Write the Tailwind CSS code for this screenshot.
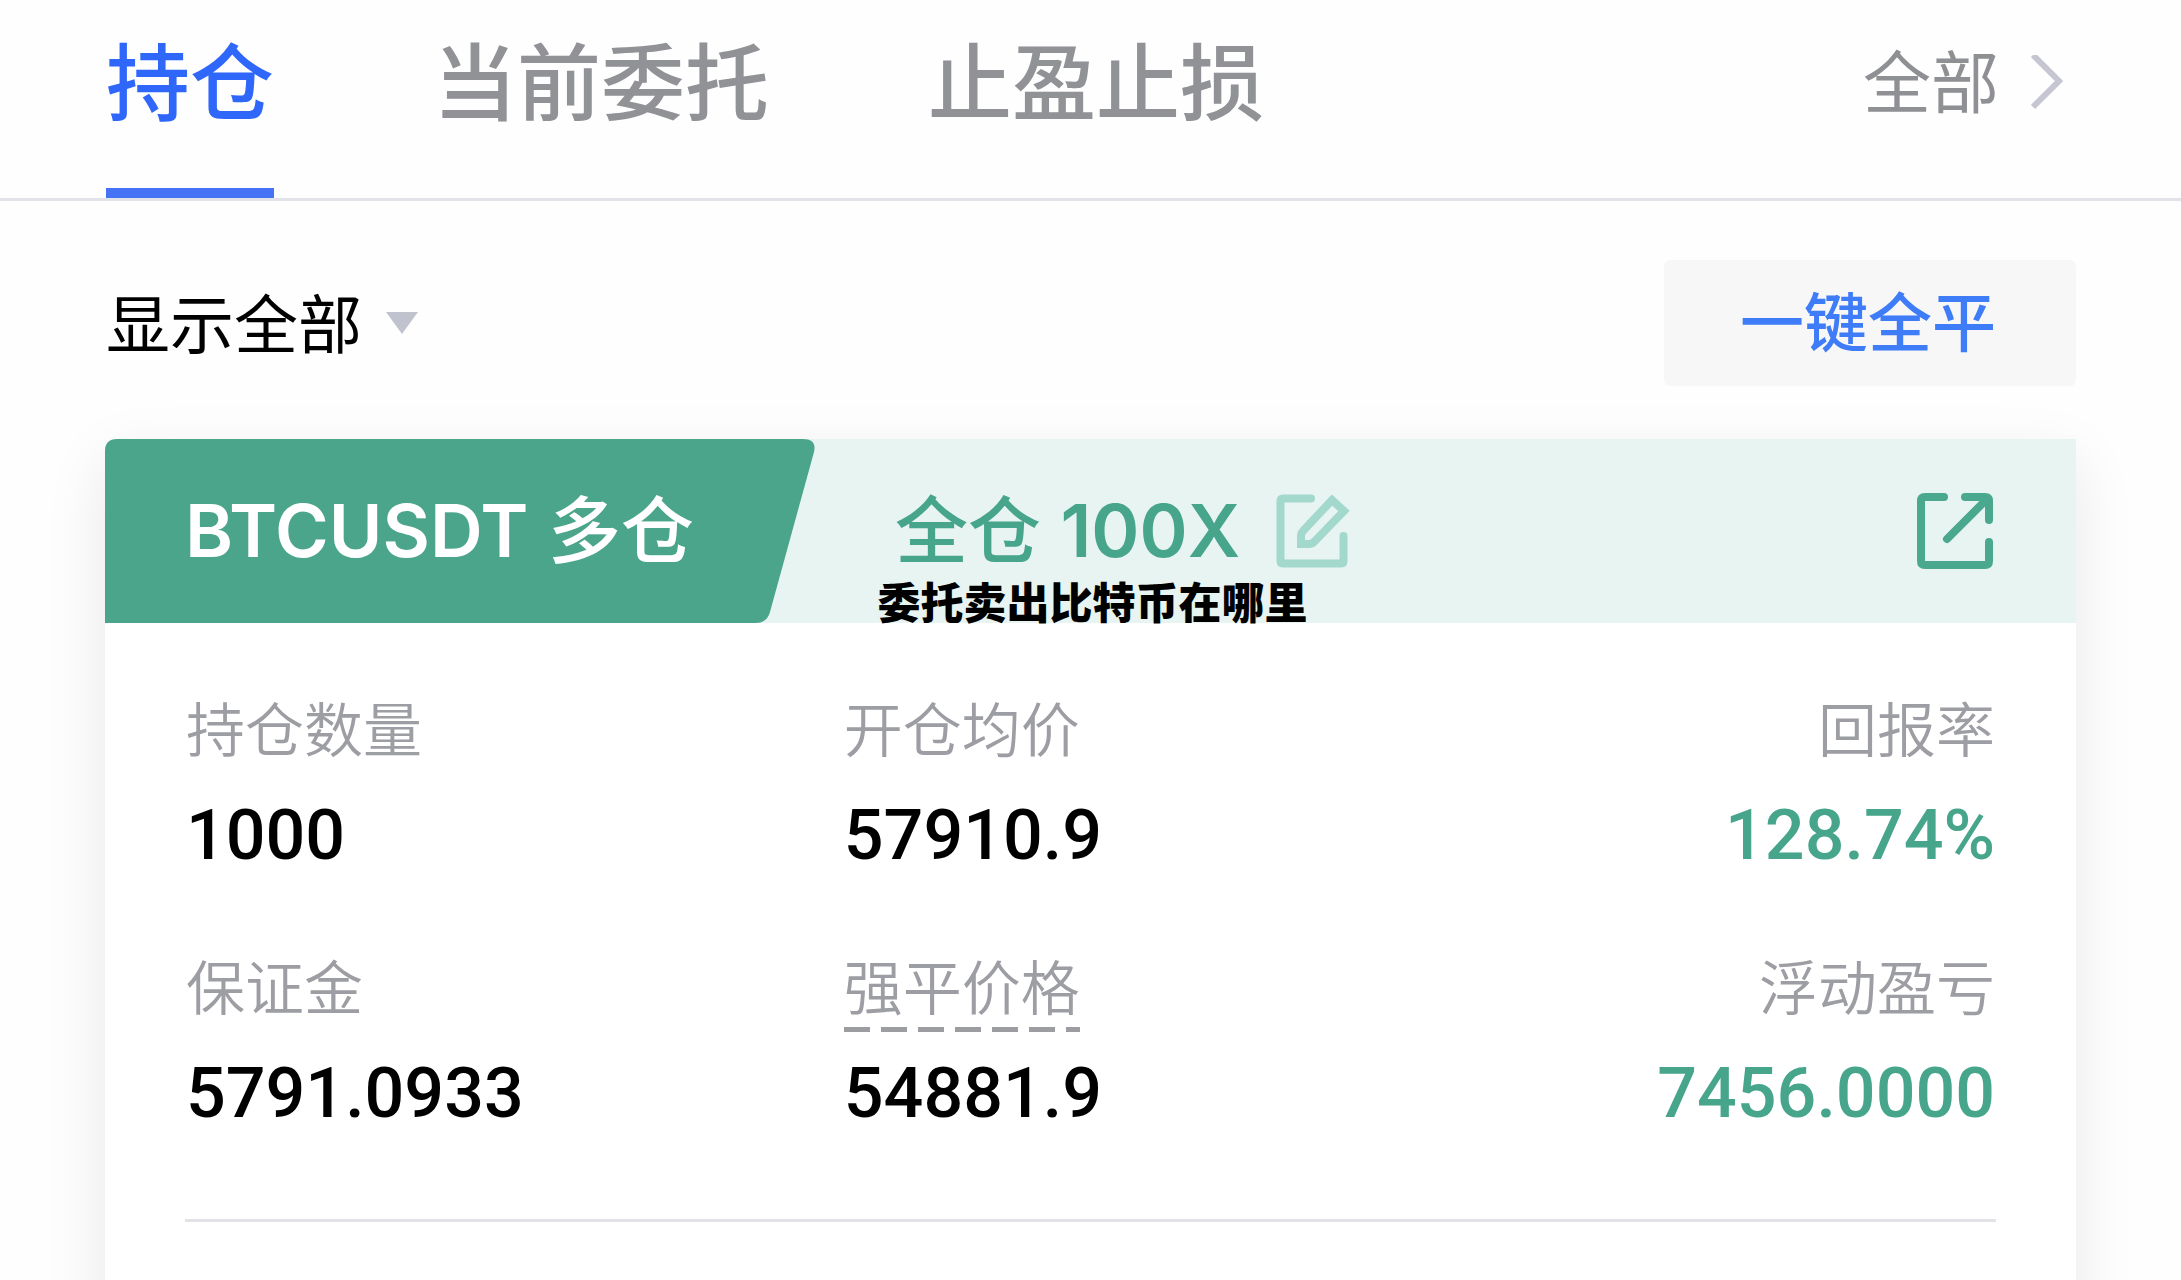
<!DOCTYPE html>
<html lang="zh-CN">

<head>
    <meta charset="UTF-8">
    <meta name="viewport" content="width=device-width, initial-scale=1.0">
    <title>持仓</title>

    <script src="https://cdn.jsdelivr.net/npm/@tailwindcss/browser@4"></script>
</head>

<body class="bg-[#fefefe] h-screen overflow-hidden font-['Inter','Noto_Sans_CJK_SC',sans-serif]">
    <!-- Tabs -->
    <div class="flex justify-between border-b-3 border-[#e2e3e8] pl-[106px] pr-[118px]">
        <nav class="flex gap-[159px] text-[84px] leading-[168px] font-medium text-[#909296]">
            <a href="#" class="border-b-10 border-[#4672f6] pb-5 text-[#3067fb]">持仓</a>
            <a href="#" class="border-b-10 border-transparent pb-5">当前委托</a>
            <a href="#" class="border-b-10 border-transparent pb-5">止盈止损</a>
        </nav>
        <a href="#" class="flex items-center gap-8 pb-8 text-[68px] leading-[156px] text-[#8f9093]">
            全部
            <svg class="w-8 h-14" viewBox="0 0 32 56" fill="none" stroke="#c5c6d1" stroke-width="6">
                <path d="M2 0l26 26L2 52" />
            </svg>
        </a>
    </div>

    <main class="px-[105px]">
        <!-- Filter -->
        <div class="flex justify-between items-center pt-[59px] pb-[53px]">
            <div class="flex items-center gap-6">
                <select aria-label="显示" class="appearance-none bg-transparent pt-1 pl-px text-[64px] leading-[100px] text-black">
                    <option>显示全部</option>
                </select>
                <svg class="w-8 h-[22px]" viewBox="0 0 32 22" fill="#c0c3ce">
                    <path d="M0 0h32L16 22z" />
                </svg>
            </div>
            <button class="w-[412px] h-[126px] pr-1 rounded-md bg-[#f7f7f7] text-[64px] leading-[100px] font-medium text-[#3f7cf7]">一键全平</button>
        </div>

        <!-- Position card -->
        <section class="relative rounded-t-xl bg-white pb-40 shadow-[0_20px_64px_rgba(0,0,0,0.09)]">
            <div class="flex h-46 items-stretch rounded-tl-xl bg-[#e7f4f2] text-[73px] leading-[100px]">
                <div class="grid w-[710px] items-center">
                    <svg class="col-start-1 row-start-1 w-full h-46" viewBox="0 0 710 184" fill="#4aa58b">
                        <path d="M12 0H698Q712 0 709 13L665 173Q662 184 651 184H0V12Q0 0 12 0z" />
                    </svg>
                    <h2 class="col-start-1 row-start-1 pl-20 font-medium text-white"><span class="font-semibold">BTCUSDT</span> 多仓</h2>
                </div>
                <div class="flex flex-1 items-center justify-between pl-20 pr-[82px]">
                    <div class="flex items-center gap-9 font-medium text-[#47a58b]">
                        <span>全仓 <span class="font-semibold">100X</span></span>
                        <button aria-label="编辑">
                            <svg class="w-[74px] h-[74px]" viewBox="0 0 74 74" fill="none" stroke="#a3d8cc" stroke-width="8" stroke-linecap="round" stroke-linejoin="round">
                                <path d="M35 4.500H7Q4.500 4.500 4.500 7V67Q4.500 69.500 7 69.500H65Q67.500 69.500 67.500 67V42" />
                                <path d="M56 6L68 17L38 48Q36 50 33 50H25V42Q25 39 27 37z" stroke-linejoin="miter" />
                            </svg>
                        </button>
                    </div>
                    <button aria-label="分享">
                        <svg class="w-[78px] h-[78px]" viewBox="0 0 78 78" fill="none" stroke="#4aa88e" stroke-width="8" stroke-linecap="round" stroke-linejoin="round">
                            <path d="M28 5H9Q5 5 5 9V69Q5 73 9 73H69Q73 73 73 69V50" />
                            <path d="M49 5H69Q73 5 73 9V28M70 8L31 47" />
                        </svg>
                    </button>
                </div>
            </div>

            <p class="absolute inset-x-0 top-[134px] pl-1 text-center text-[43px] leading-[60px] font-black text-black">委托卖出比特币在哪里</p>

            <dl class="grid grid-cols-[4fr_4fr_3fr] gap-y-[54px] px-[81px] pt-[58px] text-[59px] leading-[100px] font-[350] text-[#9d9ea3]">
                <div>
                    <dt>持仓数量</dt>
                    <dd class="pt-1 font-['Roboto'] text-[70px] font-medium text-black">1000</dd>
                </div>
                <div>
                    <dt>开仓均价</dt>
                    <dd class="pt-1 font-['Roboto'] text-[70px] font-medium text-black">57910.9</dd>
                </div>
                <div class="text-right">
                    <dt>回报率</dt>
                    <dd class="pt-1 font-['Roboto'] text-[70px] font-medium text-[#47a58b]">128.74%</dd>
                </div>
                <div>
                    <dt>保证金</dt>
                    <dd class="pt-1 font-['Roboto'] text-[70px] font-medium text-black">5791.0933</dd>
                </div>
                <div>
                    <dt><span class="pb-2 bg-[repeating-linear-gradient(90deg,#9c9da1_0_26px,transparent_26px_37px)] bg-[length:100%_5px] bg-bottom bg-no-repeat">强平价格</span></dt>
                    <dd class="pt-1 font-['Roboto'] text-[70px] font-medium text-black">54881.9</dd>
                </div>
                <div class="text-right">
                    <dt>浮动盈亏</dt>
                    <dd class="pt-1 font-['Roboto'] text-[70px] font-medium text-[#47a58b]">7456.0000</dd>
                </div>
            </dl>
            <hr class="mx-20 mt-19 border-t-3 border-[#e2e3e6]">
        </section>
    </main>
</body>

</html>
